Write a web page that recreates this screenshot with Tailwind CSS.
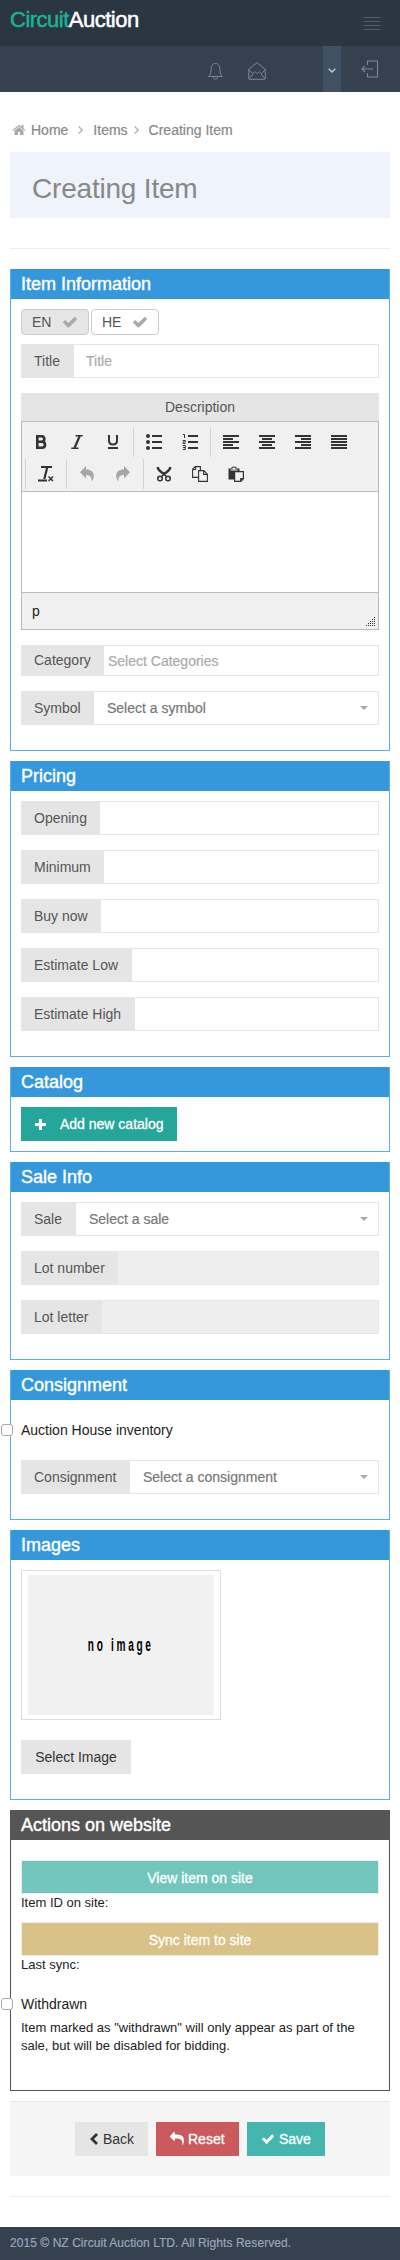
<!DOCTYPE html>
<html lang="en">
<head>
<meta charset="utf-8">
<title>Creating Item</title>
<script src="https://cdn.jsdelivr.net/npm/@tailwindcss/browser@4"></script>
</head>
<body class="w-[400px] bg-white font-['Liberation_Sans',Arial,sans-serif] text-sm leading-5 text-[#333]">
<svg class="hidden">
  <symbol id="check" viewBox="0 0 1792 1792"><path d="M1671 566q0 40-28 68l-724 724-136 136q-28 28-68 28t-68-28l-136-136-362-362q-28-28-28-68t28-68l136-136q28-28 68-28t68 28l294 295 656-657q28-28 68-28t68 28l136 136q28 28 28 68z"/></symbol>
  <symbol id="reply" viewBox="0 0 1792 1792"><path d="M1792 1120q0 166-127 451-3 7-10.5 24t-13.5 30-13 22q-12 17-28 17-15 0-23.5-10t-8.5-25q0-9 2.5-26.5t2.5-23.5q5-68 5-123 0-112-19.5-200.5t-54-153.5-88.5-112-115-78-139-50-155.5-26.5-169.5-7.5h-224v256q0 26-19 45t-45 19-45-19l-512-512q-19-19-19-45t19-45l512-512q19-19 45-19t45 19 19 45v256h224q713 0 875 403 53 134 53 333z"/></symbol>
  <symbol id="home" viewBox="0 0 1792 1792"><path d="M1472 992v480q0 26-19 45t-45 19h-384v-384h-256v384h-384q-26 0-45-19t-19-45v-480q0-1 .5-3t.5-3l575-474 575 474q1 2 1 6zm223-69l-62 74q-8 9-21 11h-3q-13 0-21-7l-692-577-692 577q-12 8-24 7-13-2-21-11l-62-74q-8-10-7-23.5t11-21.5l719-599q32-26 76-26t76 26l244 204v-195q0-14 9-23t23-9h192q14 0 23 9t9 23v408l219 182q10 8 11 21.5t-7 23.5z"/></symbol>
</svg>

<header class="flex h-[46px] justify-between bg-[#2b3643] pl-[10px] pr-5">
  <div class="mt-[7px] text-[22px] leading-[26px] tracking-[-0.5px] text-white [-webkit-text-stroke:0.5px]"><span class="text-[#1bb394]">Circuit</span>Auction</div>
  <div class="mt-[17px] flex flex-col gap-[3px]">
    <i class="h-px w-4 bg-[#4e5c6c]"></i><i class="h-px w-4 bg-[#4e5c6c]"></i><i class="h-px w-4 bg-[#4e5c6c]"></i><i class="h-px w-4 bg-[#4e5c6c]"></i>
  </div>
</header>
<nav class="flex h-[46px] items-center bg-[#364150] pl-[207px] text-[#78869f]">
  <svg class="mt-1 h-[18px] w-[17px]" viewBox="0 0 17 18" fill="none" stroke="currentColor"><path d="M1.500 14.500h14c-1.600-1.300-2.300-2.600-2.500-5.500-.1-4-.8-7.500-4.500-7.500s-4.400 3.500-4.500 7.500c-.2 2.900-.9 4.200-2.500 5.500zM6.300 14.800c.3 3.200 4.100 3.200 4.400 0"/></svg>
  <svg class="mt-1 ml-6 h-[18px] w-[18px]" viewBox="0 0 18 18" fill="none" stroke="currentColor"><path d="M.7 7.300L9 .7l8.300 6.600v9.200q0 .8-.8.800h-15q-.8 0-.8-.8zM.7 7.500l3.800 4.200 2-1.700h.8L9 11.700 10.700 10h.8l2 1.700 3.800-4.200M1 17l4-5M17 17l-4-5"/></svg>
  <div class="ml-[57px] flex h-[46px] w-[18px] items-center justify-center bg-[#415164]">
    <svg class="mt-[2px] h-[5px] w-2" viewBox="0 0 8 5" fill="none" stroke="#c5d0de" stroke-width="1.300"><path d="M.7.700L4 4 7.300.7"/></svg>
  </div>
  <svg class="ml-5 h-[18px] w-[18px]" viewBox="0 0 18 18" fill="none" stroke="currentColor" stroke-width="1.100"><path d="M6.500 5V1h10v16h-10v-4M12 9H1M4 6L1 9l3 3"/></svg>
</nav>

<main class="px-[10px]">
  <div class="mt-7 flex h-5 items-center pl-[2px] text-[#888]">
    <svg class="h-[14px] w-[14px] fill-[#aaa]"><use href="#home"/></svg>
    <span class="ml-[5px] [-webkit-text-stroke:0.2px]">Home</span>
    <svg class="ml-[10px] h-2 w-[5px]" viewBox="0 0 5 8" fill="none" stroke="#aaa" stroke-width="1.200"><path d="M.7.500L4.200 4 .7 7.500"/></svg>
    <span class="ml-[10px] [-webkit-text-stroke:0.2px]">Items</span>
    <svg class="ml-[6px] h-2 w-[5px]" viewBox="0 0 5 8" fill="none" stroke="#aaa" stroke-width="1.200"><path d="M.7.500L4.200 4 .7 7.500"/></svg>
    <span class="ml-[10px] [-webkit-text-stroke:0.2px]">Creating Item</span>
  </div>
  <h1 class="mt-3 h-[66px] bg-[#eff3fb] pt-[21px] pl-[22px] text-[28px] leading-8 tracking-[-0.2px] text-[#888]">Creating Item</h1>
  <hr class="mt-[30px] border-[#eee]">

  <section class="mt-5 h-[482px] border border-t-0 border-[#5eaee2]">
    <h2 class="h-[30px] bg-[#3598dc] pl-[10px] text-lg leading-[30px] text-white [-webkit-text-stroke:0.4px]">Item Information</h2>
    <div class="px-[10px] pt-[10px]">
      <div class="flex gap-[2px] text-[#555]">
        <button class="flex h-[26px] w-[68px] items-center rounded-[4px] border border-[#ccc] bg-[#e6e6e6] pl-[10px]">EN<svg class="ml-[11px] h-4 w-4 fill-[#aaa]"><use href="#check"/></svg></button>
        <button class="flex h-[26px] w-[68px] items-center rounded-[4px] border border-[#ccc] bg-white pl-[10px]">HE<svg class="ml-[11px] h-4 w-4 fill-[#aaa]"><use href="#check"/></svg></button>
      </div>
      <div class="mt-[9px] flex h-[34px] border border-[#e5e5e5] leading-8">
        <label class="w-[52px] bg-[#e5e5e5] pl-3 text-[#555]">Title</label><span class="pl-3 text-[#aaa] [-webkit-text-stroke:0.2px]">Title</span>
      </div>
      <div class="mt-[15px] h-7 bg-[#e5e5e5] text-center leading-7 text-[#555]">Description</div>
      <div class="border border-[#bcbcbc]">
        <div class="h-[69px] bg-[#f0f0f0] pt-[5px] text-[#333]">
          <div class="flex h-[30px] items-center pl-px">
            <div class="flex">
              <span class="flex w-9 justify-center"><svg class="size-4" viewBox="0 0 16 16" fill="none" stroke="#333" stroke-width="2.600"><path d="M4.300 1v14M3 2.300h5.500q2.800 0 2.800 2.700T8.500 7.700H4.500M4.500 7.700H9q3 0 3 3T9 13.700H3"/></svg></span>
              <span class="flex w-9 justify-center"><svg class="size-4" viewBox="0 0 16 16" fill="none" stroke="#333"><path d="M6.500 1.700h7.200M2.300 14.300h7.200" stroke-width="1.400"/><path d="M10.700 2L5.500 14" stroke-width="2.200"/></svg></span>
              <span class="flex w-9 justify-center"><svg class="size-4" viewBox="0 0 16 16" fill="none" stroke="#333" stroke-width="2"><path d="M4 1v5.500q0 4 4 4t4-4V1M3 14h10"/></svg></span>
            </div>
            <div class="ml-[2px] flex h-[30px] items-center border-l border-[#d2d2d2] pl-[2px]">
              <span class="flex w-9 justify-center"><svg class="size-4" viewBox="0 0 16 16" fill="#333"><circle cx="2" cy="2" r="2"/><circle cx="2" cy="8" r="2"/><circle cx="2" cy="14" r="2"/><path d="M6 1h10v2H6zM6 7h10v2H6zM6 13h10v2H6z"/></svg></span>
              <span class="flex w-9 justify-center"><svg class="size-4" viewBox="0 0 16 16" fill="#333"><path d="M6 1h10v2H6zM6 7h10v2H6zM6 13h10v2H6z"/><path d="M1 .500h1.500V4M.700 6.500h2.600V8H1.200v1.500h2.300M.700 11.500h2.600v4H.700M1 13.500h2" fill="none" stroke="#333"/></svg></span>
            </div>
            <div class="ml-[2px] flex h-[30px] items-center border-l border-[#d2d2d2] pl-[2px]">
              <span class="flex w-9 justify-center"><svg class="size-4" viewBox="0 0 16 16" fill="#333"><path d="M0 1h16v2H0zM0 4h10v2H0zM0 7h16v2H0zM0 10h10v2H0zM0 13h16v2H0z"/></svg></span>
              <span class="flex w-9 justify-center"><svg class="size-4" viewBox="0 0 16 16" fill="#333"><path d="M0 1h16v2H0zM3 4h10v2H3zM0 7h16v2H0zM3 10h10v2H3zM0 13h16v2H0z"/></svg></span>
              <span class="flex w-9 justify-center"><svg class="size-4" viewBox="0 0 16 16" fill="#333"><path d="M0 1h16v2H0zM6 4h10v2H6zM0 7h16v2H0zM6 10h10v2H6zM0 13h16v2H0z"/></svg></span>
              <span class="flex w-9 justify-center"><svg class="size-4" viewBox="0 0 16 16" fill="#333"><path d="M0 1h16v2H0zM0 4h16v2H0zM0 7h16v2H0zM0 10h16v2H0zM0 13h16v2H0z"/></svg></span>
            </div>
          </div>
          <div class="mt-[2px] flex h-[30px] items-center pl-[1px]">
            <div class="ml-[2px] flex h-[30px] items-center border-l border-[#d2d2d2] pl-[2px]">
              <span class="flex w-9 justify-center"><svg class="size-4" viewBox="0 0 16 16" fill="none" stroke="#333"><path d="M3 1h11M0 14.500h9" stroke-width="2"/><path d="M9.300 1L6.300 13" stroke-width="2.200"/><path d="M10.500 10.500l4.500 4.500M15 10.500L10.500 15" stroke-width="1.500"/></svg></span>
            </div>
            <div class="ml-[2px] flex h-[30px] items-center border-l border-[#d2d2d2] pl-[2px]">
              <span class="flex w-9 justify-center"><svg class="size-4" viewBox="0 0 16 16" fill="#a6a6a6"><path d="M7 0v3.500c5 0 7.800 2.200 7.800 6.500 0 2-.8 4-2.300 5.500.5-4.500-1.300-6.500-5.500-6.500v3.500L1 6.300z"/></svg></span>
              <span class="flex w-9 justify-center"><svg class="size-4 -scale-x-100" viewBox="0 0 16 16" fill="#a6a6a6"><path d="M7 0v3.500c5 0 7.800 2.200 7.800 6.500 0 2-.8 4-2.300 5.500.5-4.500-1.300-6.500-5.500-6.500v3.500L1 6.300z"/></svg></span>
            </div>
            <div class="ml-[2px] flex h-[30px] items-center border-l border-[#d2d2d2] pl-[2px]">
              <span class="flex w-9 justify-center"><svg class="size-4" viewBox="0 0 16 16" fill="none" stroke="#333" stroke-width="1.500"><path d="M1.700 1q.3 3 3.800 5.300L8 8l2.500-1.700Q14 4 14.300 1" stroke-width="2.500"/><path d="M7 7.500l4 3.500M9 7.500L5 11"/><circle cx="4" cy="12.500" r="2.300"/><circle cx="12" cy="12.500" r="2.300"/></svg></span>
              <span class="flex w-9 justify-center"><svg class="size-4" viewBox="0 0 16 16" fill="#f0f0f0" stroke="#333" stroke-width="1.100"><path d="M.6 11.400V3.200L3.200.600h5.200v10.800zM3.500.600v2.900H.6"/><path d="M6.600 15.400V4.600h5.200l3.600 3.600v7.200zM11.600 4.600v3.800h3.800"/></svg></span>
              <span class="flex w-9 justify-center"><svg class="size-4" viewBox="0 0 16 16"><path d="M.5 2.500h11v11H.5z" fill="#333"/><path d="M4 3.500V1.200h4v2.300" fill="#f0f0f0" stroke="#333"/><path d="M2.500 4h7" stroke="#f0f0f0"/><path d="M6.600 5.600h8.800v7.200l-2.600 2.600H6.600z" fill="#f0f0f0" stroke="#333" stroke-width="1.200"/><path d="M15.400 12.500h-2.900v2.900" fill="#333" stroke="#333" stroke-width=".8"/></svg></span>
            </div>
          </div>
        </div>
        <div class="h-[102px] border-y border-[#bcbcbc] bg-white"></div>
        <div class="flex h-9 items-end justify-between bg-[#f0f0f0] pr-[3px] pb-[3px]">
          <span class="mb-[5px] ml-[10px] leading-5 text-[#222]">p</span>
          <svg class="h-[9px] w-[9px]" viewBox="0 0 9 9" fill="none" stroke="#333" stroke-dasharray="1 1"><path d="M8 .5h1M6 2.500h3M4 4.500h5M2 6.500h7M0 8.500h9"/></svg>
        </div>
      </div>
      <div class="mt-[15px] flex h-[31px] border border-[#e5e5e5] leading-[30px]">
        <label class="w-[82px] bg-[#e5e5e5] pl-3 leading-[29px] text-[#555]">Category</label><span class="pl-1 text-[#aaa] [-webkit-text-stroke:0.2px]">Select Categories</span>
      </div>
      <div class="mt-[15px] flex h-[34px] items-center border border-[#e5e5e5] leading-8">
        <label class="w-[72px] bg-[#e5e5e5] pl-3 text-[#555]">Symbol</label><span class="flex-1 pl-[13px] text-[#777] [-webkit-text-stroke:0.2px]">Select a symbol</span>
        <svg class="mr-[10px] h-1 w-2 fill-[#aaa]" viewBox="0 0 8 4"><path d="M0 0h8L4 4z"/></svg>
      </div>
    </div>
  </section>

  <section class="mt-[10px] h-[296px] border border-t-0 border-[#5eaee2]">
    <h2 class="h-[30px] bg-[#3598dc] pl-[10px] text-lg leading-[30px] text-white [-webkit-text-stroke:0.4px]">Pricing</h2>
    <div class="flex flex-col gap-[15px] px-[10px] pt-[10px] leading-8 text-[#555]">
      <div class="h-[34px] border border-[#e5e5e5]"><label class="block w-[78px] bg-[#e5e5e5] pl-3">Opening</label></div>
      <div class="h-[34px] border border-[#e5e5e5]"><label class="block w-[82px] bg-[#e5e5e5] pl-3">Minimum</label></div>
      <div class="h-[34px] border border-[#e5e5e5]"><label class="block w-[79px] bg-[#e5e5e5] pl-3">Buy now</label></div>
      <div class="h-[34px] border border-[#e5e5e5]"><label class="block w-[110px] bg-[#e5e5e5] pl-3">Estimate Low</label></div>
      <div class="h-[34px] border border-[#e5e5e5]"><label class="block w-[113px] bg-[#e5e5e5] pl-3">Estimate High</label></div>
    </div>
  </section>

  <section class="mt-[10px] h-[85px] border border-t-0 border-[#5eaee2]">
    <h2 class="h-[30px] bg-[#3598dc] pl-[10px] text-lg leading-[30px] text-white [-webkit-text-stroke:0.4px]">Catalog</h2>
    <button class="mt-[10px] ml-[10px] flex h-[34px] w-[156px] items-center bg-[#26a69a] pl-[14px] text-white [-webkit-text-stroke:0.3px]"><svg class="mr-[14px] size-[11px]" viewBox="0 0 11 11" stroke="#fff" stroke-width="3"><path d="M0 5.500h11M5.500 0v11"/></svg>Add new catalog</button>
  </section>

  <section class="mt-[10px] h-[198px] border border-t-0 border-[#5eaee2]">
    <h2 class="h-[30px] bg-[#3598dc] pl-[10px] text-lg leading-[30px] text-white [-webkit-text-stroke:0.4px]">Sale Info</h2>
    <div class="flex flex-col gap-[15px] px-[10px] pt-[10px] leading-8 text-[#555]">
      <div class="flex h-[34px] items-center border border-[#e5e5e5]"><label class="w-[54px] bg-[#e5e5e5] pl-3">Sale</label><span class="flex-1 pl-[13px] text-[#777] [-webkit-text-stroke:0.2px]">Select a sale</span>
        <svg class="mr-[10px] h-1 w-2 fill-[#aaa]" viewBox="0 0 8 4"><path d="M0 0h8L4 4z"/></svg></div>
      <div class="h-[34px] border border-[#e5e5e5] bg-[#eee]"><label class="block w-[96px] bg-[#e5e5e5] pl-3">Lot number</label></div>
      <div class="h-[34px] border border-[#e5e5e5] bg-[#eee]"><label class="block w-[80px] bg-[#e5e5e5] pl-3">Lot letter</label></div>
    </div>
  </section>

  <section class="mt-[10px] h-[150px] border border-t-0 border-[#5eaee2]">
    <h2 class="h-[30px] bg-[#3598dc] pl-[10px] text-lg leading-[30px] text-white [-webkit-text-stroke:0.4px]">Consignment</h2>
    <div class="px-[10px] pt-5">
      <label class="-ml-5 flex h-5 items-center text-[#222]"><input type="checkbox" class="mr-2 size-3 appearance-none rounded-[3px] border border-[#aaa] bg-white">Auction House inventory</label>
      <div class="mt-5 flex h-[34px] items-center border border-[#e5e5e5] leading-8 text-[#555]"><label class="w-[108px] bg-[#e5e5e5] pl-3">Consignment</label><span class="flex-1 pl-[13px] text-[#777] [-webkit-text-stroke:0.2px]">Select a consignment</span>
        <svg class="mr-[10px] h-1 w-2 fill-[#aaa]" viewBox="0 0 8 4"><path d="M0 0h8L4 4z"/></svg></div>
    </div>
  </section>

  <section class="mt-[10px] h-[270px] border border-t-0 border-[#5eaee2]">
    <h2 class="h-[30px] bg-[#3598dc] pl-[10px] text-lg leading-[30px] text-white [-webkit-text-stroke:0.4px]">Images</h2>
    <div class="px-[10px] pt-[10px]">
      <div class="h-[150px] w-[200px] border border-[#ddd] px-[6px] py-1">
        <div class="flex h-[140px] items-center justify-center bg-[#f1f1f1] font-['Liberation_Sans',sans-serif] text-[18px] font-bold text-black"><span class="inline-block scale-x-[0.56] tracking-[4.800px] whitespace-nowrap">no image</span></div>
      </div>
      <button class="mt-5 h-[34px] w-[110px] bg-[#e5e5e5] text-[#333]">Select Image</button>
    </div>
  </section>

  <section class="mt-[10px] h-[281px] border border-t-0 border-[#555]">
    <h2 class="h-[30px] bg-[#555] pl-[10px] text-lg leading-[30px] text-white [-webkit-text-stroke:0.4px]">Actions on website</h2>
    <div class="px-[10px] pt-5 text-[13px] leading-[18px] text-[#222]">
      <button class="block h-[34px] w-full border border-[#eee] bg-[#73c6be] pt-px text-sm text-white [-webkit-text-stroke:0.3px]">View item on site</button>
      <p>Item ID on site:</p>
      <button class="mt-[10px] block h-[34px] w-full border border-[#eee] bg-[#d9c188] pt-px text-sm text-white [-webkit-text-stroke:0.3px]">Sync item to site</button>
      <p>Last sync:</p>
      <label class="mt-5 -ml-5 flex h-5 items-center text-sm"><input type="checkbox" class="mr-2 size-3 appearance-none rounded-[3px] border border-[#aaa] bg-white">Withdrawn</label>
      <p class="mt-[5px]">Item marked as "withdrawn" will only appear as part of the sale, but will be disabled for bidding.</p>
    </div>
  </section>

  <div class="mt-[10px] flex h-[75px] justify-center gap-2 border-t border-[#e5e5e5] bg-[#f5f5f5] pt-5">
    <button class="flex h-[34px] w-[73px] items-center bg-[#e5e5e5] pl-[15px] text-[#333]"><svg class="mr-[5px] h-3 w-2" viewBox="0 0 8 12" fill="none" stroke="#333" stroke-width="2.800"><path d="M7 1L2 6l5 5"/></svg>Back</button>
    <button class="flex h-[34px] w-[83px] items-center bg-[#cb5a5e] pl-[14px] text-white [-webkit-text-stroke:0.3px]"><svg class="mr-[4px] size-[14px] fill-white"><use href="#reply"/></svg>Reset</button>
    <button class="flex h-[34px] w-[78px] items-center bg-[#45b6af] pl-[14px] text-white [-webkit-text-stroke:0.3px]"><svg class="mr-[4px] size-[14px] fill-white"><use href="#check"/></svg>Save</button>
  </div>
  <hr class="mt-5 border-[#eee]">
</main>
<footer class="mt-[30px] h-[33px] bg-[#364150] pl-[10px] text-xs leading-8 tracking-[0.06px] text-[#98a6ba] [-webkit-text-stroke:0.2px]">2015 © NZ Circuit Auction LTD. All Rights Reserved.</footer>
</body>
</html>
